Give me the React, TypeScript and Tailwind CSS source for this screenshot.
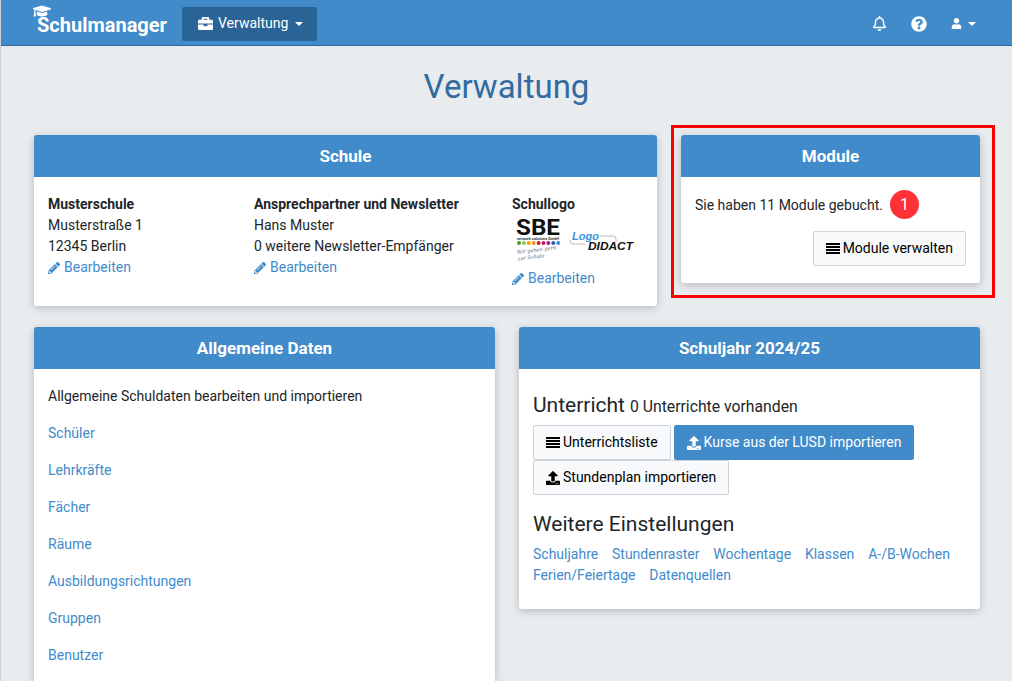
import type { ReactNode } from 'react'
import { FaBriefcase, FaGraduationCap, FaPencilAlt, FaQuestionCircle, FaRegBell, FaUpload, FaUser } from 'react-icons/fa'

function Card({ title, children, className = '' }: { title: string; children: ReactNode; className?: string }) {
  return (
    <section className={`rounded-[3px] bg-white shadow-[0_2px_8px_rgba(0,0,0,0.22)] ${className}`}>
      <h2 className="flex h-[42px] items-center justify-center rounded-t-[3px] bg-[#428bca] pt-[1px] text-[17px] font-bold text-white">
        {title}
      </h2>
      {children}
    </section>
  )
}

function EditLink() {
  return (
    <a className="flex h-[21px] items-center gap-[4px] text-[#428bca]">
      <FaPencilAlt size={12} />
      Bearbeiten
    </a>
  )
}

function ListIcon() {
  return (
    <svg width="14" height="11" viewBox="0 0 14 11" fill="currentColor" aria-hidden="true">
      <rect y="0" width="14" height="2" />
      <rect y="3" width="14" height="2" />
      <rect y="6" width="14" height="2" />
      <rect y="9" width="14" height="2" />
    </svg>
  )
}

function Button({ icon, label, primary = false }: { icon: ReactNode; label: string; primary?: boolean }) {
  return (
    <button
      className={`flex h-[35px] items-center gap-[3px] rounded-[2px] border px-[12px] ${
        primary ? 'border-[#428bca] bg-[#428bca] text-white' : 'border-[#ced4da] bg-[#f8f9fa] text-black'
      }`}
    >
      {icon}
      {label}
    </button>
  )
}

function SchoolLogos() {
  return (
    <svg width="122" height="53" viewBox="0 0 122 53" className="block" role="img" aria-label="SBE, LogoDIDACT">
      <text x="4" y="20" fontFamily="Roboto, sans-serif" fontWeight="700" fontSize="22.5" textLength="44" lengthAdjust="spacingAndGlyphs" fill="#111">SBE</text>
      <text x="5" y="24.5" fontFamily="Roboto, sans-serif" fontWeight="700" fontSize="3.6" textLength="42" lengthAdjust="spacingAndGlyphs" fill="#333">network solutions GmbH</text>
      {['#3f9c35', '#8cc63f', '#f9a01b', '#f7941d', '#c1272d', '#d4145a', '#92278f', '#2e5fa8', '#3b8fd4'].map((c, i) => (
        <circle key={c} cx={7 + i * 4.9} cy="28" r="2" fill={c} />
      ))}
      <g transform="rotate(-7 5 39)" fontFamily="'DejaVu Serif', serif" fontStyle="italic" fontSize="5" fill="#666">
        <text x="5" y="39">Wir gehen gern</text>
        <text x="5" y="45.5">zur Schule</text>
      </g>
      <text x="60" y="25" fontFamily="'Liberation Sans', sans-serif" fontStyle="italic" fontWeight="700" fontSize="11" fill="#3b93d9">Logo</text>
      <path d="M88 21h13q3 0 3 3v3M58 25q0 4 3 4h12" fill="none" stroke="#aaa" strokeWidth="0.8" />
      <text x="76" y="35" fontFamily="'Liberation Sans', sans-serif" fontStyle="italic" fontWeight="700" fontSize="11.5" textLength="45" lengthAdjust="spacingAndGlyphs" fill="#111">DIDACT</text>
    </svg>
  )
}

const dataLinks = ['Schüler', 'Lehrkräfte', 'Fächer', 'Räume', 'Ausbildungsrichtungen', 'Gruppen', 'Benutzer']
const yearLinks = ['Schuljahre', 'Stundenraster', 'Wochentage', 'Klassen', 'A-/B-Wochen', 'Ferien/Feiertage', 'Datenquellen']

export default function App() {
  return (
    <div className="h-[681px] overflow-hidden border-l border-[#c9ced3] bg-[#e9ecef] font-['Roboto',sans-serif] text-sm leading-[21px] text-[#212529]">
      <nav className="-ml-[1px] flex h-[46px] items-center border-b border-[#2f6a9e] bg-[#428bca] pr-[36px] text-white">
        <a className="relative ml-[37px] mt-[5px] w-[130px] text-xl font-bold leading-none">
          <FaGraduationCap size={18} className="absolute -left-[4px] -top-[13px]" />
          Schulmanager
        </a>
        <button className="ml-[15px] mt-[2px] flex h-[34px] w-[135px] items-center gap-[5px] rounded-[2px] bg-[#2a6496] pl-[16px]">
          <FaBriefcase size={15} />
          Verwaltung
          <span className="ml-[2px] border-x-[4px] border-t-[4px] border-x-transparent border-t-white" />
        </button>
        <div className="ml-auto mt-[2px] flex items-center">
          <FaRegBell size={15} />
          <FaQuestionCircle size={16} className="ml-[24px]" />
          <FaUser size={11} className="ml-[24px]" />
          <span className="ml-[6px] border-x-[4px] border-t-[4px] border-x-transparent border-t-white" />
        </div>
      </nav>

      <h1 className="mt-[20px] text-center text-[33px] leading-[42px] text-[#336b9f]">Verwaltung</h1>

      <main className="ml-[33px] mr-[32px] mt-[27px]">
        <div className="flex items-start gap-[24px]">
          <Card title="Schule" className="h-[171px] w-[623px]">
            <div className="flex px-[14px] pt-[17px]">
              <div className="w-[206px]">
                <strong className="block font-bold">Musterschule</strong>
                <p>Musterstraße 1</p>
                <p>12345 Berlin</p>
                <EditLink />
              </div>
              <div className="w-[258px]">
                <strong className="block font-bold">Ansprechpartner und Newsletter</strong>
                <p>Hans Muster</p>
                <p>0 weitere Newsletter-Empfänger</p>
                <EditLink />
              </div>
              <div>
                <strong className="block font-bold">Schullogo</strong>
                <SchoolLogos />
                <EditLink />
              </div>
            </div>
          </Card>

          <Card title="Module" className="relative h-[148px] w-[299px]">
            <div className="flex items-center px-[14px] pt-[13px]">
              <span className="pt-[1px]">Sie haben 11 Module gebucht.</span>
              <span className="ml-[7px] flex h-[29px] w-[29px] items-center justify-center rounded-full bg-[#ff3036] text-base text-white">1</span>
            </div>
            <div className="mt-[12px] flex justify-end px-[14px]">
              <Button icon={<ListIcon />} label="Module verwalten" />
            </div>
            <div className="absolute -bottom-[15px] -left-[10px] -right-[15px] -top-[10px] border-[3px] border-[#ff0000]" />
          </Card>
        </div>

        <div className="mt-[21px] flex items-start gap-[24px]">
          <Card title="Allgemeine Daten" className="w-[461px]">
            <div className="px-[14px] pb-[16px] pt-[17px]">
              <p>Allgemeine Schuldaten bearbeiten und importieren</p>
              {dataLinks.map((link) => (
                <a key={link} className="mt-[16px] block text-[#428bca]">{link}</a>
              ))}
            </div>
          </Card>

          <Card title="Schuljahr 2024/25" className="h-[282px] w-[461px]">
            <div className="px-[14px] pt-[21px]">
              <h3 className="flex h-[30px] items-baseline gap-[5px] text-[21px] leading-[30px]">
                Unterricht <small className="text-[15.75px]">0 Unterrichte vorhanden</small>
              </h3>
              <div className="mt-[5px] flex flex-wrap gap-x-[3px]">
                <Button icon={<ListIcon />} label="Unterrichtsliste" />
                <Button primary icon={<FaUpload size={14} />} label="Kurse aus der LUSD importieren" />
                <Button icon={<FaUpload size={14} />} label="Stundenplan importieren" />
              </div>
              <h3 className="mt-[14px] text-[21px] leading-[30px]">Weitere Einstellungen</h3>
              <div className="mt-[5px] flex flex-wrap gap-x-[13.8px] text-[#428bca]">
                {yearLinks.map((link) => (
                  <a key={link}>{link}</a>
                ))}
              </div>
            </div>
          </Card>
        </div>
      </main>
    </div>
  )
}
